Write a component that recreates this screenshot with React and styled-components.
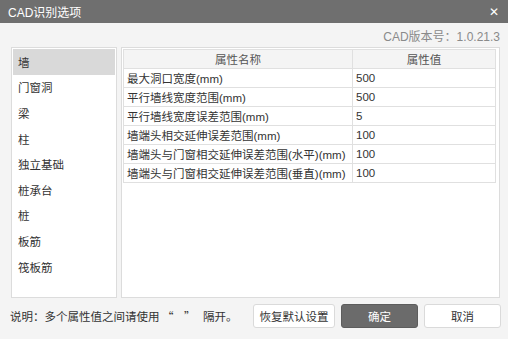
import React, { useState } from "react";
import styled, { createGlobalStyle } from "styled-components";

const GlobalStyle = createGlobalStyle`
  html, body {
    margin: 0;
    padding: 0;
    background: #f4f4f4;
  }
  body {
    font-family: "Liberation Sans", "Noto Sans CJK SC", sans-serif;
    font-size: 11.5px;
    color: #333;
  }
`;

const Dialog = styled.div`
  width: 508px;
  height: 339px;
  display: flex;
  flex-direction: column;
  background: #f4f4f4;
  overflow: hidden;
`;

const TitleBar = styled.div`
  height: 23px;
  flex-shrink: 0;
  background: #6f6f6f;
  color: #fff;
  display: flex;
  align-items: center;
  justify-content: space-between;
  padding: 0 9px 0 8px;
  font-size: 12px;
`;

const CloseButton = styled.span`
  font-size: 12px;
  line-height: 1;
  color: #fff;
`;

const Version = styled.div`
  height: 24px;
  display: flex;
  align-items: center;
  justify-content: flex-end;
  padding-right: 8px;
  color: #8a8a8a;
  font-size: 12px;
`;

const Main = styled.div`
  display: flex;
  gap: 4px;
  padding: 0 8px 0 11px;
  height: 251px;
`;

const CategoryList = styled.ul`
  width: 102px;
  margin: 0;
  padding: 1px;
  list-style: none;
  background: #fff;
  border: 1px solid #dcdcdc;
  flex-shrink: 0;
`;

const CategoryItem = styled.li`
  height: 25.6px;
  display: flex;
  align-items: center;
  padding-left: 5px;
  font-size: 11.5px;
  color: #333;
  background: ${(p) => (p.$active ? "#d9d9d9" : "transparent")};
  cursor: default;
`;

const TablePanel = styled.div`
  flex: 1;
  background: #fff;
  border: 1px solid #dcdcdc;
  padding: 1px 3px 0 1px;
`;

const Table = styled.table`
  width: 100%;
  border-collapse: collapse;
  font-size: 11.5px;
  color: #333;
`;

const HeadCell = styled.th`
  height: 18px;
  padding: 0;
  font-weight: normal;
  background: #f4f4f4;
  border: 1px solid #e0e0e0;
  color: #555;
  text-align: center;
  width: ${(p) => p.$width || "auto"};
`;

const Cell = styled.td`
  height: 18px;
  padding: 0 0 0 3px;
  border: 1px solid #e0e0e0;
  white-space: nowrap;
`;

const Footer = styled.div`
  flex: 1;
  display: flex;
  align-items: center;
  padding: 0 7px 6px 10px;
  gap: 6px;
`;

const Note = styled.div`
  flex: 1;
  font-family: "Noto Sans CJK SC", sans-serif;
  font-size: 11.5px;
  color: #333;
  white-space: pre;
`;

const Button = styled.button`
  height: 24px;
  width: ${(p) => p.$width}px;
  border: 1px solid ${(p) => (p.$primary ? "#5d5d5d" : "#dadada")};
  border-radius: 3px;
  background: ${(p) => (p.$primary ? "#6b6b6b" : "#fff")};
  color: ${(p) => (p.$primary ? "#fff" : "#333")};
  font-family: inherit;
  font-size: 11.5px;
  padding: 0;
`;

const categories = ["墙", "门窗洞", "梁", "柱", "独立基础", "桩承台", "桩", "板筋", "筏板筋"];

const rows = [
  ["最大洞口宽度(mm)", "500"],
  ["平行墙线宽度范围(mm)", "500"],
  ["平行墙线宽度误差范围(mm)", "5"],
  ["墙端头相交延伸误差范围(mm)", "100"],
  ["墙端头与门窗相交延伸误差范围(水平)(mm)", "100"],
  ["墙端头与门窗相交延伸误差范围(垂直)(mm)", "100"],
];

export default function App() {
  const [active, setActive] = useState(0);

  return (
    <>
      <GlobalStyle />
      <Dialog>
        <TitleBar>
          <span>CAD识别选项</span>
          <CloseButton>✕</CloseButton>
        </TitleBar>
        <Version>CAD版本号：1.0.21.3</Version>
        <Main>
          <CategoryList>
            {categories.map((c, i) => (
              <CategoryItem key={c} $active={i === active} onClick={() => setActive(i)}>
                {c}
              </CategoryItem>
            ))}
          </CategoryList>
          <TablePanel>
            <Table>
              <thead>
                <tr>
                  <HeadCell $width="228px">属性名称</HeadCell>
                  <HeadCell>属性值</HeadCell>
                </tr>
              </thead>
              <tbody>
                {rows.map(([name, value]) => (
                  <tr key={name}>
                    <Cell>{name}</Cell>
                    <Cell>{value}</Cell>
                  </tr>
                ))}
              </tbody>
            </Table>
          </TablePanel>
        </Main>
        <Footer>
          <Note>说明：多个属性值之间请使用 “    ”   隔开。</Note>
          <Button $width={82}>恢复默认设置</Button>
          <Button $width={77} $primary>确定</Button>
          <Button $width={77}>取消</Button>
        </Footer>
      </Dialog>
    </>
  );
}
